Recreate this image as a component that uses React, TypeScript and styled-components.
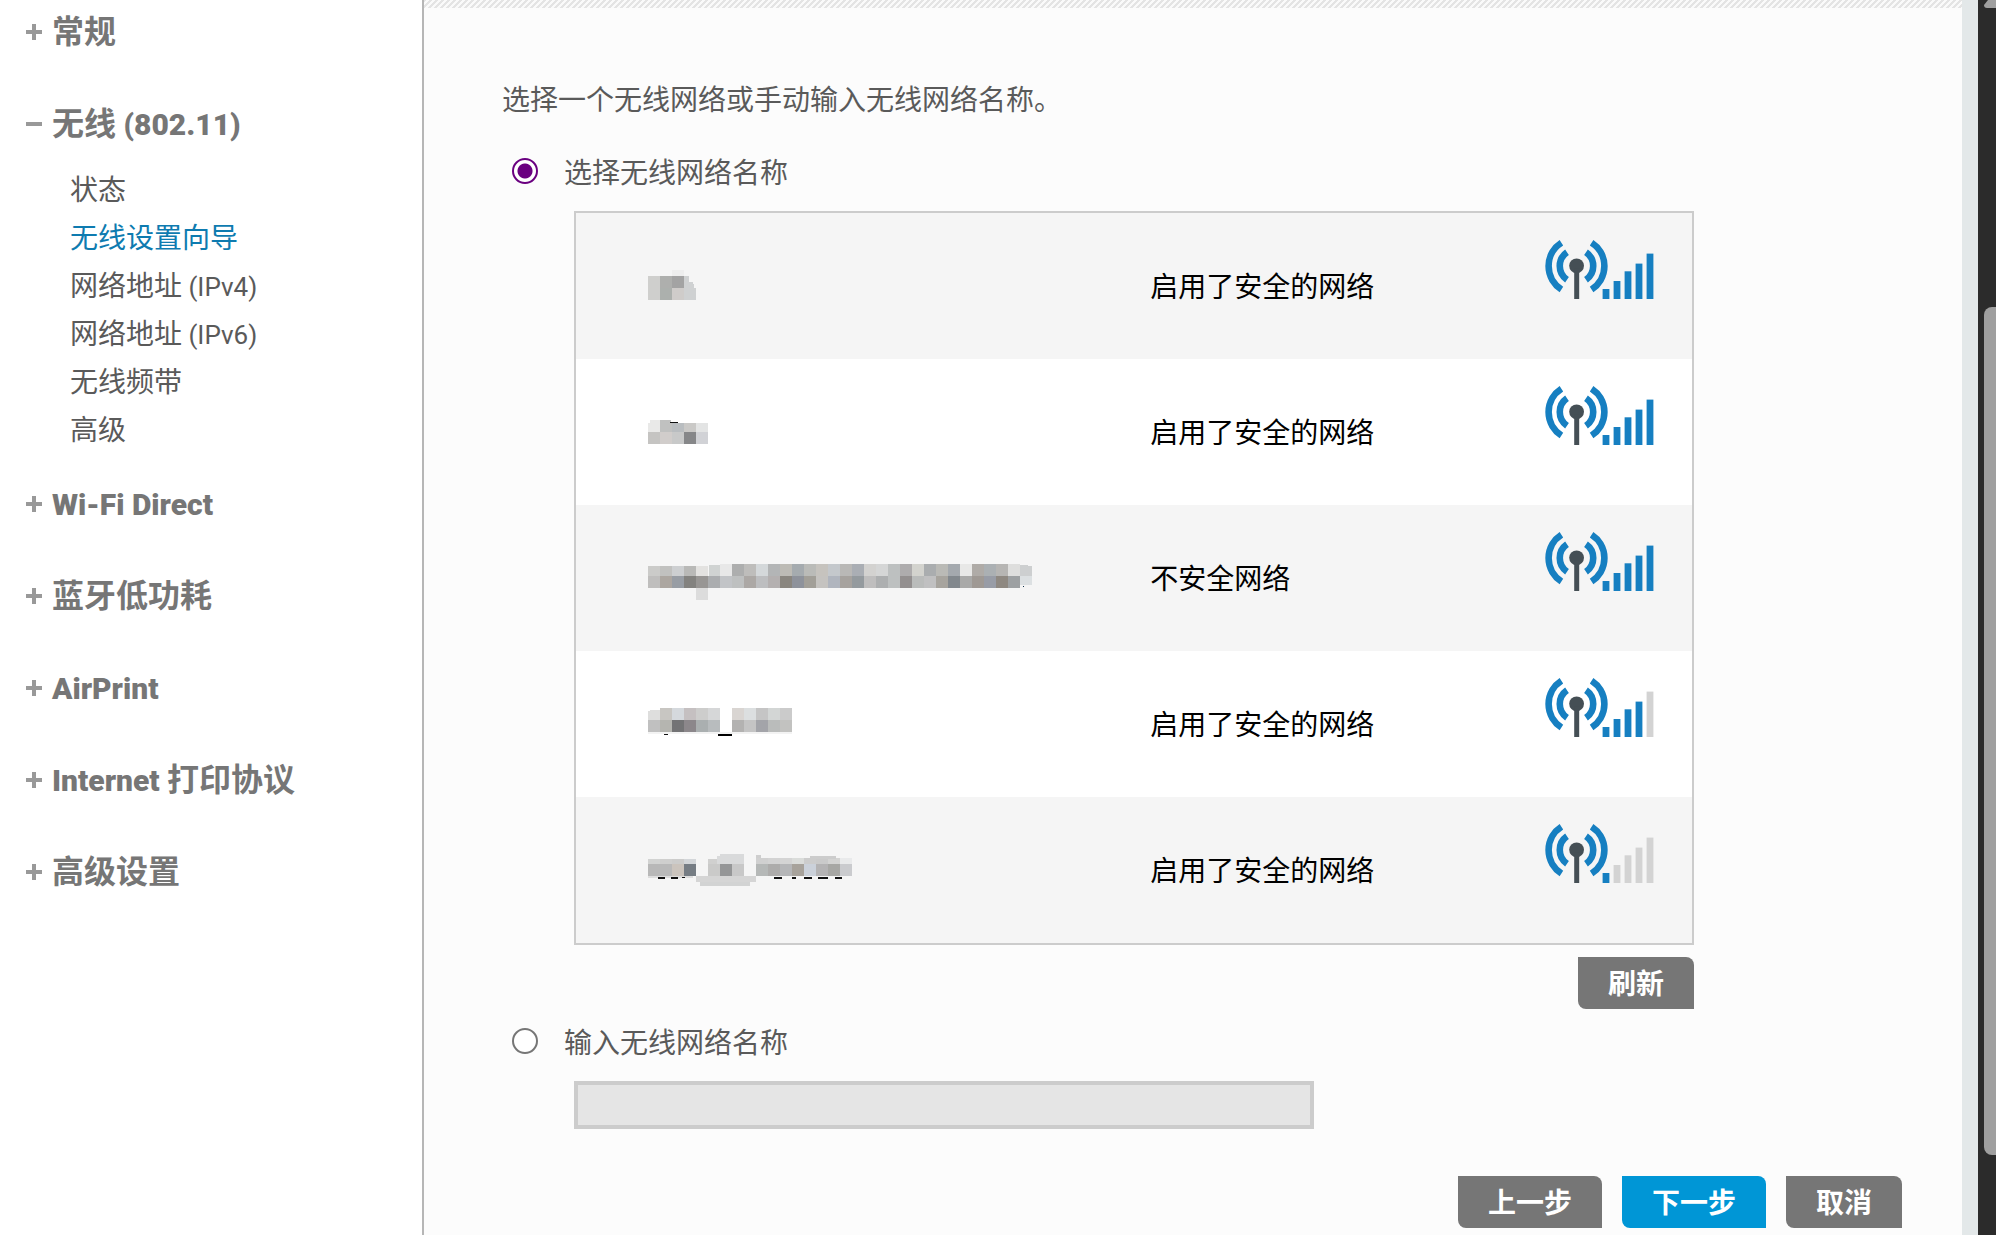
import React, { useState } from "react";
import styled, { createGlobalStyle, css } from "styled-components";

const GlobalStyle = createGlobalStyle`
  * { box-sizing: border-box; }
  body {
    margin: 0;
    background: #fff;
    font-family: "Noto Sans CJK SC", "Noto Sans", sans-serif;
    font-size: 28px;
    line-height: 40px;
    color: #5a5a5a;
  }
`;

const Page = styled.div`
  display: flex;
  min-height: 100vh;
`;

const Sidebar = styled.nav`
  flex: 0 0 424px;
  padding-top: 8px;
  border-right: 2px solid #b6b6b6;
  background: #fff;
`;

const Menu = styled.ul`
  margin: 0;
  padding: 0;
  list-style: none;
`;

const MenuHeading = styled.button<{ $open?: boolean }>`
  display: flex;
  align-items: center;
  gap: 10px;
  width: 100%;
  height: 44px;
  padding: 0 0 2px 26px;
  margin-bottom: ${(p) => (p.$open ? 20 : 48)}px;
  border: 0;
  background: none;
  font: inherit;
  font-size: 32px;
  line-height: 42px;
  font-weight: 700;
  color: #767676;
  text-align: left;
  cursor: pointer;
`;

const Sign = styled.svg`
  width: 16px;
  height: 16px;
  margin-top: 6px;
  flex: none;
`;

const SubMenu = styled.ul`
  margin: 0 0 28px;
  padding: 0 0 0 70px;
  list-style: none;
`;

const SubLink = styled.a<{ $current?: boolean }>`
  display: block;
  line-height: 48px;
  color: ${(p) => (p.$current ? "#0e7bb0" : "#5a5a5a")};
  text-decoration: none;
`;

const Latin = styled.span<{ $heading?: boolean }>`
  font-family: Roboto, "Noto Sans", sans-serif;
  font-size: ${(p) => (p.$heading ? 30 : 26)}px;
  font-weight: ${(p) => (p.$heading ? 900 : 400)};
  line-height: 1;
`;

const Main = styled.main`
  flex: 1;
  min-width: 0;
  background: #fcfcfc;
`;

const Hatch = styled.div`
  height: 8px;
  background: linear-gradient(135deg, #e4e4e4 25%, #fafafa 25% 50%, #e4e4e4 50% 75%, #fafafa 75%);
  background-size: 6px 6px;
`;

const Wizard = styled.form`
  padding: 70px 60px 7px 78px;
`;

const Intro = styled.p`
  margin: 0 0 33px;
`;

const Choice = styled.label`
  display: flex;
  align-items: center;
  gap: 26px;
  padding-left: 10px;
  margin-bottom: 20px;
`;

const Radio = styled.input`
  appearance: none;
  width: 26px;
  height: 26px;
  margin: 0;
  border: 2px solid #767676;
  border-radius: 50%;
  background: #fff;
  &:checked {
    border-color: #6a0080;
    background: radial-gradient(circle, #6a0080 7px, #fff 8px);
  }
`;

const Indented = styled.div`
  width: 80%;
  margin: 0 0 12px 72px;
`;

const Frame = styled.div`
  border: 2px solid #ccc;
`;

const Networks = styled.table`
  width: 100%;
  border-collapse: collapse;
  table-layout: fixed;
  color: #000;
`;

const Row = styled.tr`
  height: 146px;
  background: #fff;
  &:nth-child(odd) { background: #f5f5f5; }
`;

const Cell = styled.td<{ $width?: string }>`
  width: ${(p) => p.$width ?? "auto"};
  padding: 0 0 2px 72px;
  vertical-align: middle;
`;

const SignalCell = styled.td`
  padding: 26px 37px 0 0;
  text-align: right;
  vertical-align: top;
  svg { display: block; margin-left: auto; }
`;

const MosaicArt = styled.svg`
  display: block;
  overflow: visible;
`;

const Actions = styled.div<{ $top: number }>`
  display: flex;
  justify-content: flex-end;
  gap: 20px;
  margin-top: ${(p) => p.$top}px;
`;

const Button = styled.button<{ $primary?: boolean }>`
  height: 52px;
  padding: 0 30px 2px;
  border: 0;
  border-radius: 0 8px 0 8px;
  background: #767676;
  color: #fff;
  font: inherit;
  font-weight: 700;
  cursor: pointer;
  ${(p) => p.$primary && css`background: #0096d6;`}
`;

const NameInput = styled.input`
  display: block;
  width: 740px;
  max-width: 100%;
  height: 48px;
  margin-left: 72px;
  padding: 0 8px;
  border: 4px solid #ccc;
  border-radius: 0;
  background: #e5e5e5;
  font: inherit;
`;

const Gutter = styled.div`
  flex: 0 0 16px;
  background: #e3e8e9;
`;

const ScrollTrack = styled.div`
  flex: 0 0 18px;
  display: grid;
  grid-template-rows: 8px 299fr 848fr 80fr;
  padding-left: 6px;
  overflow: hidden;
  background: #2b2b2b;
`;

const ScrollThumb = styled.div`
  grid-row: 3;
  border-radius: 8px 0 0 8px;
  background: #9f9f9f;
`;

const menu = [
  { label: "常规" },
  {
    label: "无线 (802.11)",
    items: ["状态", "无线设置向导", "网络地址 (IPv4)", "网络地址 (IPv6)", "无线频带", "高级"],
  },
  { label: "Wi-Fi Direct" },
  { label: "蓝牙低功耗" },
  { label: "AirPrint" },
  { label: "Internet 打印协议" },
  { label: "高级设置" },
];

/* Sets the Latin runs of a mixed label in their own, slightly smaller face. */
const Mixed = ({ text, heading }: { text: string; heading?: boolean }) => (
  <span>
    {text
      .split(/([\x20-\x7e]+)/)
      .filter(Boolean)
      .map((part, i) =>
        /^[\x20-\x7e]/.test(part) ? <Latin key={i} $heading={heading}>{part}</Latin> : part,
      )}
  </span>
);

type Block = [x: number, y: number, w: number, h: number, color: string];

/* A run of equal 12px blocks, left to right; a dash leaves a hole. */
const run = (y: number, h: number, colors: string, x = 0): Block[] =>
  colors
    .split(" ")
    .map((c, i): Block => [x + i * 12, y, 12, h, c === "-" ? "none" : `#${c}`]);

const lower = (dy: number, blocks: Block[]): Block[] =>
  blocks.map(([x, y, w, h, color]): Block => [x, y + dy, w, h, color]);

const networks: { blocks: Block[]; security: string; level: number }[] = [
  {
    security: "启用了安全的网络",
    level: 5,
    blocks: [
      [24, 6, 12, 6, "#eeeeee"],
      ...run(12, 12, "cfcfcd aeafad a3a3a3"),
      [36, 12, 5, 12, "#cfd1d2"],
      ...run(24, 12, "cfcfcd acb0ad cfccca"),
      [36, 18, 9, 6, "#cfd1d2"],
      [36, 24, 12, 12, "#cfd1d2"],
      [41, 20, 5, 4, "#cfd1d2"],
    ],
  },
  {
    security: "启用了安全的网络",
    level: 5,
    blocks: lower(1, [
      [2, 9, 10, 3, "#e9e9e8"],
      [12, 9, 11, 3, "#c0c1c0"],
      [22, 11, 8, 1, "#111111"],
      ...run(12, 9, "e9e9e8 c0c1c0 b9bdc0 cac9c7 e3e4e4"),
      ...run(21, 12, "c5c4c2 d1cdcb c8c9c9 868789 d1d2d6"),
    ]),
  },
  {
    security: "不安全网络",
    level: 5,
    blocks: lower(2, [
      ...run(8, 10, "cbcbc9 c1c1bf cdcfd1 b9b9b7 e3e2e0"),
      [61, 7, 11, 11, "#d0d3d2"],
      ...run(
        6,
        12,
        "e8e8e8 adaeae bebdbb d4d8da b3b5b6 bdbbb5 a5abaf babbb8 c6c3be c4c8cc b9b8b6 aaaeb4 d3d2d0 d5d6d6 bdc0c0 aeacad d3d3ce aaadaf babab6 a4a9ae e8e8e7 afaba7 abb0b3 b6b5b3 dededd",
        72,
      ),
      [372, 8, 12, 19, "#dce0e2"],
      [372, 7, 8, 3, "#cdcfd0"],
      [372, 8, 12, 10, "#cdcfd0"],
      ...run(
        18,
        12,
        "bfbebd aca6a0 989da4 83827f 989694 abadaf c2c4c7 bec0c0 aca8a5 bdbec0 b4b0b0 8a867f 8e929b a29f98 c5c3c0 b0b5be a6a29e 949a9e bfbebe adafb0 bdc0c0 938f8f babcbb c0c0c1 a7a49e 82888d a9a9a8 9f9994 989ca6 8e8881 9da0a2",
      ),
      [48, 30, 12, 12, "#dcdcdc"],
      [375, 28, 1, 1, "#11334d"],
    ]),
  },
  {
    security: "启用了安全的网络",
    level: 4,
    blocks: [
      [2, 8, 10, 2, "#dededd"],
      [0, 9, 12, 9, "#dededd"],
      ...run(6, 12, "c8c6c2 d5d9dd c5c0c1 cdcdcc d6d7d8 - d9d5d2 dcdfe0 c5c5c5 d3d6d5 cbcbcb", 12),
      ...run(18, 12, "c0c0c0 b5b5b0 737375 8c878b aaafb0 b8bcbe - b3b2b1 c4c4c4 a3a4a9 babcbb c2c2c0"),
      [0, 30, 144, 2, "#f3f3f3"],
      [16, 32, 4, 1, "#111111"],
      [70, 32, 14, 2, "#000000"],
    ],
  },
  {
    security: "启用了安全的网络",
    level: 1,
    blocks: [
      ...run(11, 5, "d2d3d2 cfcfce cccccb d3d6d9 - d0d0cf"),
      [72, 6, 24, 10, "#d9dadb"],
      [69, 8, 10, 8, "#d9dadb"],
      [108, 7, 5, 9, "#cecece"],
      ...run(10, 6, "d0d0d0 d3d3d3 d4d4d4 dadcda cccccc cacaca d3d3d2 e9eaeb", 108),
      [162, 8, 26, 3, "#cccccc"],
      ...run(16, 12, "b8b8b8 b9b9b9 cbc4bd 767d84 - cacac9 959697 c8c8c8 - b5b8b7 adacab b5b6b8 a7a29b cbd1da b4b3b4 a7a7a4 cacbce"),
      [0, 28, 45, 2, "#dddddd"],
      [48, 28, 60, 6, "#d5d5d5"],
      [52, 34, 50, 4, "#d2d3d3"],
      [10, 29, 7, 2, "#111111"],
      [23, 29, 7, 2, "#111111"],
      [34, 29, 3, 1, "#111111"],
      [126, 29, 8, 2, "#111111"],
      [144, 29, 4, 2, "#111111"],
      [156, 29, 8, 2, "#111111"],
      [170, 29, 10, 2, "#111111"],
      [187, 29, 7, 2, "#111111"],
    ],
  },
];

const Mosaic = ({ blocks }: { blocks: Block[] }) => (
  <MosaicArt width="388" height="42" shapeRendering="crispEdges" role="img" aria-label="…">
    {blocks.map(([x, y, w, h, color], i) => (
      <rect key={i} x={x} y={y} width={w} height={h} fill={color} />
    ))}
  </MosaicArt>
);

const barTops = [68.7, 60.7, 51, 43.3, 33.3];

const Signal = ({ level }: { level: number }) => (
  <svg width="110" height="60" viewBox="14 18.7 110 60" role="img" aria-label={`${level}/5`}>
    <g fill="none" stroke="#167fc1" strokeWidth="6.6">
      <path d="M30.4 22.4A27.8 27.8 0 0 0 30.4 69.2" />
      <path d="M60.6 22.4A27.8 27.8 0 0 1 60.6 69.2" />
      <path d="M36 32A16.6 16.6 0 0 0 36 59.4" />
      <path d="M55 32A16.6 16.6 0 0 1 55 59.4" />
    </g>
    <circle cx="45.6" cy="45.5" r="7.4" fill="#454f55" />
    <rect x="43.2" y="48" width="5" height="30.7" fill="#454f55" />
    {barTops.map((top, i) => (
      <rect
        key={top}
        x={71.6 + i * 11}
        y={top}
        width="6.8"
        height={78.7 - top}
        fill={i < level ? "#167fc1" : "#d3d3d3"}
      />
    ))}
  </svg>
);

export default function App() {
  const [mode, setMode] = useState("pick");
  return (
    <>
      <GlobalStyle />
      <Page>
        <Sidebar>
          <Menu>
            {menu.map(({ label, items }) => (
              <li key={label}>
                <MenuHeading type="button" $open={!!items} aria-expanded={!!items}>
                  <Sign viewBox="0 0 16 16" stroke="#999" strokeWidth="4">
                    <path d={items ? "M0 8H16" : "M0 8H16M8 0V16"} />
                  </Sign>
                  <Mixed text={label} heading />
                </MenuHeading>
                {items && (
                  <SubMenu>
                    {items.map((item, i) => (
                      <li key={item}>
                        <SubLink href="#" $current={i === 1}>
                          <Mixed text={item} />
                        </SubLink>
                      </li>
                    ))}
                  </SubMenu>
                )}
              </li>
            ))}
          </Menu>
        </Sidebar>
        <Main>
          <Hatch />
          <Wizard onSubmit={(e) => e.preventDefault()}>
            <Intro>选择一个无线网络或手动输入无线网络名称。</Intro>
            <Choice>
              <Radio type="radio" name="mode" checked={mode === "pick"} onChange={() => setMode("pick")} />
              选择无线网络名称
            </Choice>
            <Indented>
              <Frame>
                <Networks>
                  <tbody>
                    {networks.map(({ blocks, security, level }, i) => (
                      <Row key={i}>
                        <Cell $width="45%"><Mosaic blocks={blocks} /></Cell>
                        <Cell $width="35%">{security}</Cell>
                        <SignalCell><Signal level={level} /></SignalCell>
                      </Row>
                    ))}
                  </tbody>
                </Networks>
              </Frame>
              <Actions $top={12}>
                <Button type="button">刷新</Button>
              </Actions>
            </Indented>
            <Choice>
              <Radio type="radio" name="mode" checked={mode === "type"} onChange={() => setMode("type")} />
              输入无线网络名称
            </Choice>
            <NameInput type="text" aria-label="无线网络名称" disabled={mode !== "type"} />
            <Actions $top={47}>
              <Button type="button">上一步</Button>
              <Button type="submit" $primary>下一步</Button>
              <Button type="button">取消</Button>
            </Actions>
          </Wizard>
        </Main>
        <Gutter />
        <ScrollTrack>
          <svg width="12" height="8" viewBox="0 0 12 8">
            <path d="M4 0H12V8H3Q0 8 0 5Z" fill="#9f9f9f" />
          </svg>
          <ScrollThumb />
        </ScrollTrack>
      </Page>
    </>
  );
}
